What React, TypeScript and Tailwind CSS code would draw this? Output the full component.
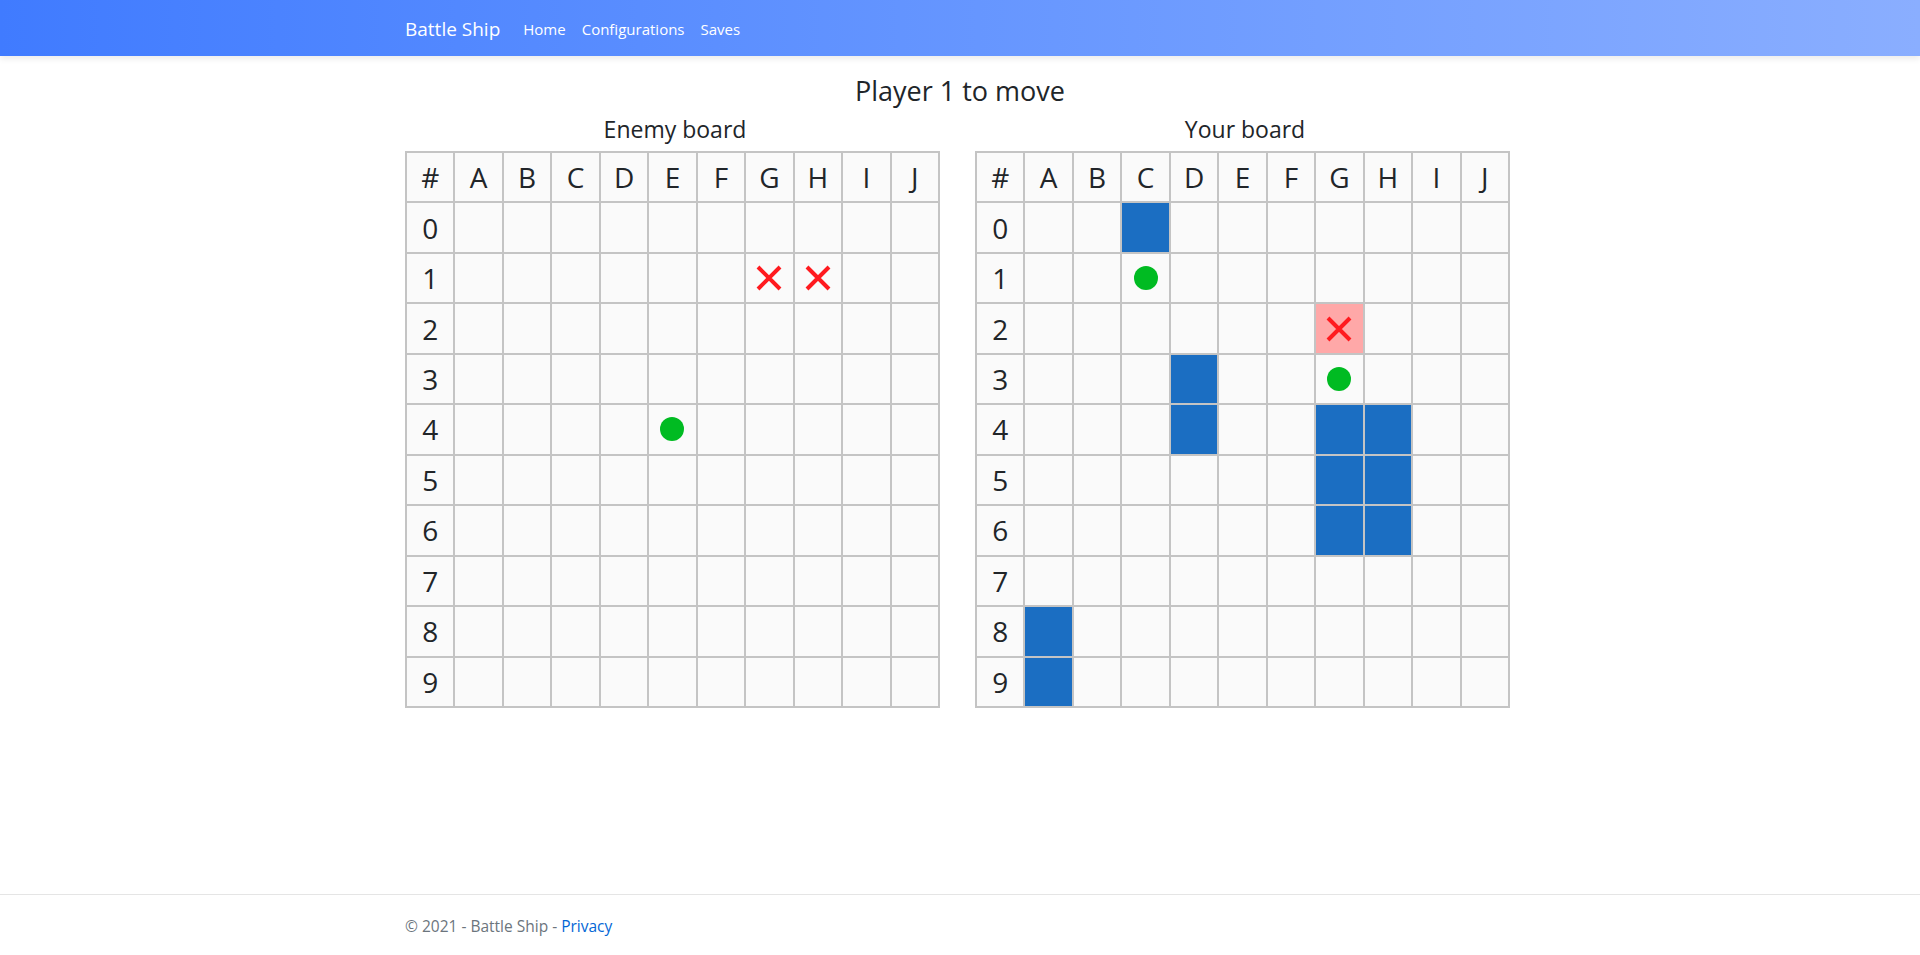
import React from "react";

const COLS = ["A", "B", "C", "D", "E", "F", "G", "H", "I", "J"];
const ROWS = [0, 1, 2, 3, 4, 5, 6, 7, 8, 9];

type Mark = "ship" | "miss" | "hit" | "shiphit";

const enemy: Record<string, Mark> = {
  G1: "hit",
  H1: "hit",
  E4: "miss",
};

const mine: Record<string, Mark> = {
  C0: "ship",
  C1: "miss",
  G2: "shiphit",
  D3: "ship",
  G3: "miss",
  D4: "ship",
  G4: "ship",
  H4: "ship",
  G5: "ship",
  H5: "ship",
  G6: "ship",
  H6: "ship",
  A8: "ship",
  A9: "ship",
};

function Cross() {
  return (
    <svg width="28" height="28" viewBox="0 0 28 28">
      <path d="M3 3 L25 25 M25 3 L3 25" stroke="#ff1a1f" strokeWidth="4" strokeLinecap="butt" />
    </svg>
  );
}

function Cell({ mark }: { mark?: Mark }) {
  if (mark === "ship") return <div className="bg-[#1b6ec2]" />;
  if (mark === "shiphit")
    return (
      <div className="bg-[#ffa8a8] flex items-center justify-center">
        <Cross />
      </div>
    );
  if (mark === "hit")
    return (
      <div className="bg-[#fafafa] flex items-center justify-center">
        <Cross />
      </div>
    );
  if (mark === "miss")
    return (
      <div className="bg-[#fafafa] flex items-center justify-center">
        <div className="w-[24px] h-[24px] rounded-full bg-[#00bb22]" />
      </div>
    );
  return <div className="bg-[#fafafa]" />;
}

function Board({ title, marks }: { title: string; marks: Record<string, Mark> }) {
  return (
    <div>
      <div className="h-[39px] pb-[4px] flex items-center justify-center text-[23px] text-[#212529]">{title}</div>
      <div className="w-[535px] h-[557px] grid grid-cols-11 grid-rows-11 gap-[2px] p-[2px] bg-[#c4c4c4]">
        <div className="bg-[#fafafa] flex items-center justify-center text-[28px] text-[#212529]">#</div>
        {COLS.map((c) => (
          <div key={c} className="bg-[#fafafa] flex items-center justify-center text-[28px] text-[#212529]">
            {c}
          </div>
        ))}
        {ROWS.map((r) => (
          <React.Fragment key={r}>
            <div className="bg-[#fafafa] flex items-center justify-center text-[28px] text-[#212529]">{r}</div>
            {COLS.map((c) => (
              <Cell key={c + r} mark={marks[c + r]} />
            ))}
          </React.Fragment>
        ))}
      </div>
    </div>
  );
}

export default function App() {
  return (
    <div className="min-h-screen flex flex-col bg-white" style={{ fontFamily: "'Open Sans', 'Noto Sans', sans-serif" }}>
      {/* Navbar */}
      <nav className="h-[56px] bg-gradient-to-r from-[#407bff] to-[#8aaeff] shadow-[0_3px_6px_rgba(0,0,0,0.08)]">
        <div className="w-[1110px] mx-auto h-full pt-[3px] flex items-center">
          <span className="text-white text-[19px] mr-[15px]">Battle Ship</span>
          <span className="text-white text-[15px] px-[8px]">Home</span>
          <span className="text-white text-[15px] px-[8px]">Configurations</span>
          <span className="text-white text-[15px] px-[8px]">Saves</span>
        </div>
      </nav>

      <main className="w-[1110px] mx-auto">
        <div className="h-[56px] pt-[14px] flex items-center justify-center text-[27px] text-[#212529]">Player 1 to move</div>
        <div className="grid grid-cols-2 gap-[30px]">
          <Board title="Enemy board" marks={enemy} />
          <Board title="Your board" marks={mine} />
        </div>
      </main>

      <footer className="mt-auto border-t border-[#e5e5e5] h-[61px]">
        <div className="w-[1110px] mx-auto h-full pt-[3px] flex items-center text-[15.5px] text-[#6c757d]">
          © 2021 - Battle Ship -&nbsp;<span className="text-[#0366d6]">Privacy</span>
        </div>
      </footer>
    </div>
  );
}
